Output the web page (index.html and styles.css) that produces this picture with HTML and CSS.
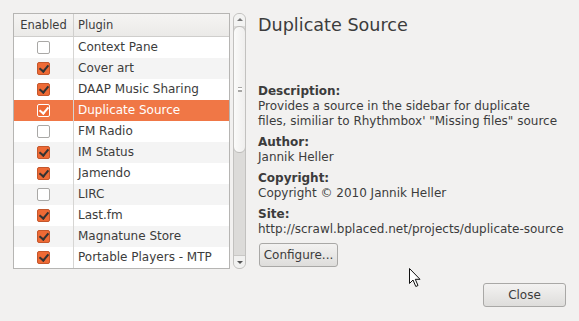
FILE: index.html
```html
<!DOCTYPE html>
<html lang="en">
<head>
    <meta charset="UTF-8">
    <title>Configure Plugins</title>
    <link rel="stylesheet" href="styles.css">
</head>
<body>
    <div class="dialog">
        <div class="main">
            <!-- plugin list -->
            <div class="tree">
                <div class="row head">
                    <div class="col-check">Enabled</div>
                    <div class="col-name">Plugin</div>
                </div>
                <div class="row"><div class="col-check"><span class="box"></span></div><div class="col-name">Context Pane</div></div>
                <div class="row alt"><div class="col-check"><span class="box on"></span></div><div class="col-name">Cover art</div></div>
                <div class="row"><div class="col-check"><span class="box on"></span></div><div class="col-name">DAAP Music Sharing</div></div>
                <div class="row selected"><div class="col-check"><span class="box on"></span></div><div class="col-name">Duplicate Source</div></div>
                <div class="row"><div class="col-check"><span class="box"></span></div><div class="col-name">FM Radio</div></div>
                <div class="row alt"><div class="col-check"><span class="box on"></span></div><div class="col-name">IM Status</div></div>
                <div class="row"><div class="col-check"><span class="box on"></span></div><div class="col-name">Jamendo</div></div>
                <div class="row alt"><div class="col-check"><span class="box"></span></div><div class="col-name">LIRC</div></div>
                <div class="row"><div class="col-check"><span class="box on"></span></div><div class="col-name">Last.fm</div></div>
                <div class="row alt"><div class="col-check"><span class="box on"></span></div><div class="col-name">Magnatune Store</div></div>
                <div class="row"><div class="col-check"><span class="box on"></span></div><div class="col-name">Portable Players - MTP</div></div>
            </div>

            <div class="scrollbar">
                <div class="arrow up"></div>
                <div class="thumb"><span class="grip"></span></div>
                <div class="trough"></div>
                <div class="arrow down"></div>
            </div>

            <!-- details -->
            <div class="details">
                <h1 class="title">Duplicate Source</h1>
                <div class="field">
                    <div class="label">Description:</div>
                    <div>Provides a source in the sidebar for duplicate<br>files, similiar to Rhythmbox' "Missing files" source</div>
                </div>
                <div class="field">
                    <div class="label">Author:</div>
                    <div>Jannik Heller</div>
                </div>
                <div class="field">
                    <div class="label">Copyright:</div>
                    <div>Copyright © 2010 Jannik Heller</div>
                </div>
                <div class="field">
                    <div class="label">Site:</div>
                    <div>http://scrawl.bplaced.net/projects/duplicate-source</div>
                </div>
                <div><button class="btn configure">Configure...</button></div>
            </div>
        </div>

        <div class="actions">
            <button class="btn close">Close</button>
        </div>

        <svg class="cursor" width="13" height="20" viewBox="0 0 13 20">
            <path d="M0.5 0.5 L0.5 15.5 L4 12 L6.8 18.5 L9 17.5 L6.3 11.3 L11 11.3 Z" fill="#fff" stroke="#111" stroke-width="1"/>
        </svg>
    </div>
</body>
</html>
```

FILE: styles.css
```css
body {
    margin: 0;
    background-color: #f2f1f0;
    font-family: "DejaVu Sans", sans-serif;
    font-size: 12px;
    color: #3c3c3c;
}
.dialog {
    position: relative;
    width: 579px;
    height: 321px;
    box-sizing: border-box;
    padding: 13px 13px 0 13px;
}
.main {
    display: flex;
    height: 256px;
}
.tree {
    width: 215px;
    border: 1px solid #b6b5b3;
    background-color: #fff;
}
.row {
    display: flex;
    height: 21px;
    line-height: 21px;
}
.row.alt {
    background-color: #f4f4f4;
}
.row.selected {
    background-color: #f07746;
    color: #fff;
}
.row.head {
    height: 22px;
    line-height: 22px;
    background: linear-gradient(#f5f4f3, #ebeae8);
    border-bottom: 1px solid #cfcecc;
    font-size: 11.5px;
}
.col-check {
    width: 59px;
    border-right: 1px solid #d6d5d3;
    display: flex;
    align-items: center;
    justify-content: center;
}
.head .col-check {
    border-right-color: #d0cfcd;
}
.col-name {
    padding-left: 4px;
}
.box {
    width: 11px;
    height: 11px;
    border: 1px solid #a9a8a6;
    border-radius: 2px;
    background-color: #fff;
    position: relative;
}
.box.on {
    background-color: #ee6a35;
    border-color: #c4572c;
}
.box.on::after {
    content: "";
    position: absolute;
    left: 3px;
    top: 0px;
    width: 4px;
    height: 7px;
    border-right: 2px solid #333;
    border-bottom: 2px solid #333;
    transform: rotate(40deg);
}
.selected .box.on {
    border-color: #fff;
}
.selected .box.on::after {
    border-color: #fff;
}
.scrollbar {
    width: 11px;
    margin-left: 3px;
    border: 1px solid #c2c1bf;
    border-radius: 6px;
    background-color: #dcdbd9;
    display: flex;
    flex-direction: column;
    overflow: hidden;
}
.arrow {
    height: 12px;
    background-color: #f3f3f2;
    position: relative;
}
.arrow::after {
    content: "";
    position: absolute;
    left: 3px;
    border-left: 3px solid transparent;
    border-right: 3px solid transparent;
}
.arrow.up::after {
    top: 4px;
    border-bottom: 3px solid #777;
}
.arrow.down::after {
    top: 5px;
    border-top: 3px solid #555;
}
.thumb {
    height: 125px;
    background: linear-gradient(to right, #fbfbfa, #efeeed);
    border: 1px solid #bdbcba;
    border-radius: 6px;
    margin: 0 -1px;
    display: flex;
    align-items: center;
    justify-content: center;
}
.grip {
    width: 4px;
    height: 5px;
    border-top: 1px solid #a8a7a5;
    border-bottom: 1px solid #a8a7a5;
    background: linear-gradient(#fff 0 2px, #a8a7a5 2px 3px, #fff 3px);
    background-clip: content-box;
    box-sizing: border-box;
}
.trough {
    flex: 1;
}
.arrow.down {
    border-top: 1px solid #c9c8c6;
    background-color: #f1f1f0;
}
.details {
    margin-left: 12px;
    line-height: 15px;
}
.title {
    margin: 0 0 47px 0;
    font-size: 17.6px;
    font-weight: normal;
    line-height: 24px;
    color: #3c3c3c;
}
.field {
    margin-bottom: 6px;
}
.label {
    font-weight: bold;
}
.btn {
    font-family: "DejaVu Sans", sans-serif;
    font-size: 12px;
    color: #3c3c3c;
    height: 24px;
    border: 1px solid #a9a8a6;
    border-radius: 3px;
    background: linear-gradient(#f3f2f1, #dedddb);
    padding: 0;
}
.configure {
    width: 79px;
    margin-left: 1px;
}
.actions {
    display: flex;
    justify-content: flex-end;
    margin-top: 14px;
}
.close {
    width: 83px;
}
.cursor {
    position: absolute;
    left: 409px;
    top: 268px;
}
```
